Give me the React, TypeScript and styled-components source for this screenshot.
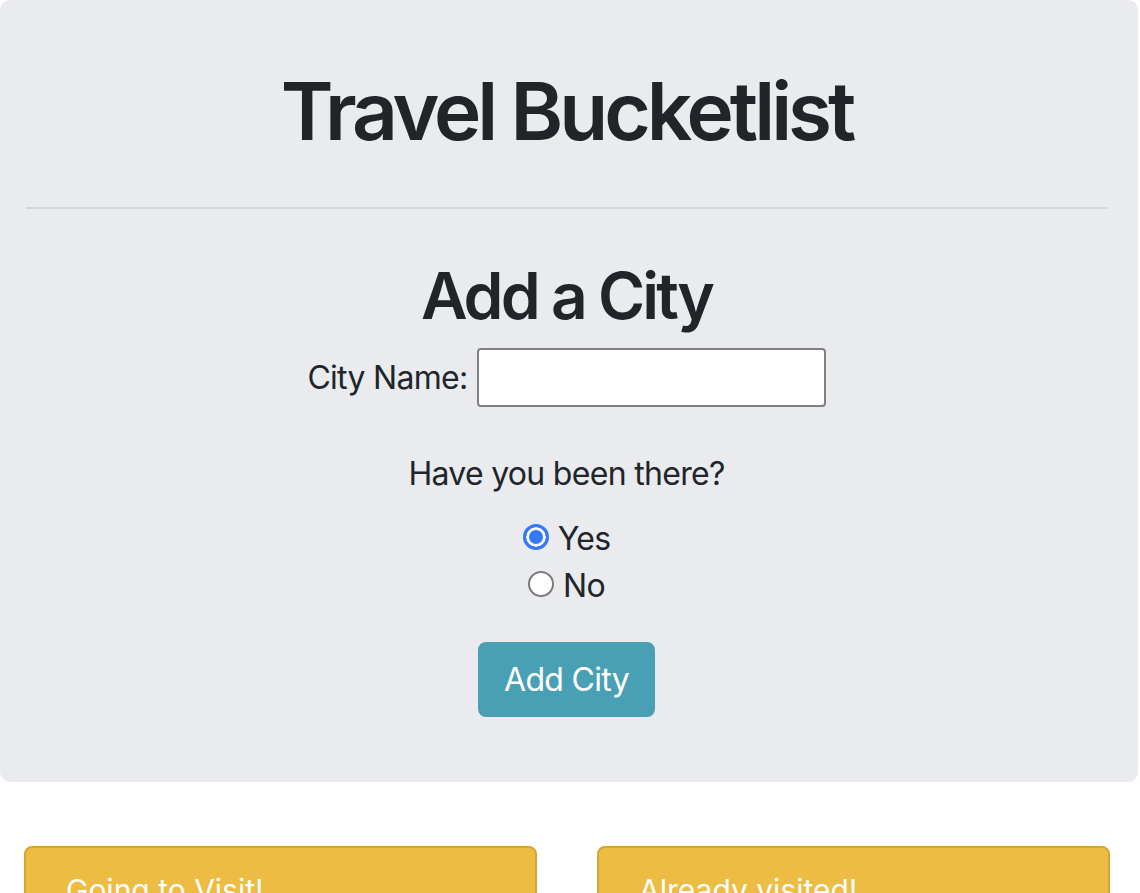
import React, { useState } from "react";
import styled, { createGlobalStyle } from "styled-components";

const GlobalStyle = createGlobalStyle`
  html, body {
    margin: 0;
    padding: 0;
    background: #ffffff;
  }
  body {
    font-family: Inter, "Noto Sans", "Liberation Sans", sans-serif;
    color: #212529;
    -webkit-font-smoothing: antialiased;
  }
  * { box-sizing: border-box; }
`;

const Jumbotron = styled.section`
  background: #e9ebef;
  border-radius: 10px;
  margin: 0 2px 64px 0;
  padding: 63px 31px 65px 26px;
  text-align: center;
`;

const Title = styled.h1`
  margin: 0;
  font-size: 80px;
  line-height: 96px;
  font-weight: 600;
  letter-spacing: -0.05em;
`;

const Divider = styled.hr`
  border: 0;
  border-top: 2px solid #d3d5d9;
  margin: 48px 0 48px;
`;

const SubTitle = styled.h2`
  margin: 0 0 14px;
  font-size: 64px;
  line-height: 77px;
  font-weight: 600;
  letter-spacing: -0.045em;
`;

const Form = styled.form`
  display: flex;
  flex-direction: column;
  align-items: center;
`;

const FieldRow = styled.div`
  display: flex;
  align-items: center;
  justify-content: center;
  gap: 9px;
`;

const Label = styled.label`
  font-size: 32px;
  line-height: 48px;
  letter-spacing: -0.7px;
`;

const TextInput = styled.input`
  width: 349px;
  height: 59px;
  border: 2px solid #808080;
  border-radius: 4px;
  background: #ffffff;
  font-size: 28px;
  padding: 0 8px;
  font-family: inherit;
  outline: none;
`;

const Question = styled.p`
  margin: 43px 0 0;
  font-size: 32px;
  line-height: 48px;
  letter-spacing: -0.7px;
`;

const RadioGroup = styled.div`
  margin-top: 17px;
  display: flex;
  flex-direction: column;
  align-items: center;
`;

const RadioRow = styled.label`
  display: flex;
  align-items: center;
  font-size: 32px;
  line-height: 47px;
  letter-spacing: -0.7px;
  cursor: pointer;
`;

const Radio = styled.input`
  appearance: none;
  -webkit-appearance: none;
  width: 26px;
  height: 26px;
  margin: 0 9px 4px 0;
  border-radius: 50%;
  border: 2px solid #7a7a7a;
  background: #ffffff;
  &:checked {
    border: 3px solid #3579f6;
    background: #3579f6;
    box-shadow: inset 0 0 0 3px #ffffff;
  }
`;

const SubmitButton = styled.button`
  margin-top: 33px;
  background: #49a0b5;
  color: #ffffff;
  border: 2px solid #49a0b5;
  border-radius: 8px;
  padding: 12px 24px;
  font-family: inherit;
  font-size: 32px;
  line-height: 47px;
  font-weight: 400;
  letter-spacing: -0.7px;
  cursor: pointer;
`;

const CardGrid = styled.div`
  display: grid;
  grid-template-columns: 1fr 1fr;
  gap: 60px;
  padding: 0 30px 0 24px;
`;

const Card = styled.div`
  background: #edbc42;
  border: 2px solid #d7a535;
  border-radius: 8px;
  min-height: 240px;
`;

const CardHeader = styled.h3`
  margin: 0;
  padding: 24px 40px;
  font-size: 30px;
  line-height: 36px;
  font-weight: 400;
  color: #ffffff;
`;

export default function App() {
  const [visited, setVisited] = useState("yes");
  return (
    <>
      <GlobalStyle />
      <Jumbotron>
        <Title>Travel Bucketlist</Title>
        <Divider />
        <SubTitle>Add a City</SubTitle>
        <Form onSubmit={(e) => e.preventDefault()}>
          <FieldRow>
            <Label htmlFor="city">City Name:</Label>
            <TextInput id="city" type="text" />
          </FieldRow>
          <Question>Have you been there?</Question>
          <RadioGroup>
            <RadioRow>
              <Radio
                type="radio"
                name="visited"
                checked={visited === "yes"}
                onChange={() => setVisited("yes")}
              />
              Yes
            </RadioRow>
            <RadioRow>
              <Radio
                type="radio"
                name="visited"
                checked={visited === "no"}
                onChange={() => setVisited("no")}
              />
              No
            </RadioRow>
          </RadioGroup>
          <SubmitButton type="submit">Add City</SubmitButton>
        </Form>
      </Jumbotron>
      <CardGrid>
        <Card>
          <CardHeader>Going to Visit!</CardHeader>
        </Card>
        <Card>
          <CardHeader>Already visited!</CardHeader>
        </Card>
      </CardGrid>
    </>
  );
}
